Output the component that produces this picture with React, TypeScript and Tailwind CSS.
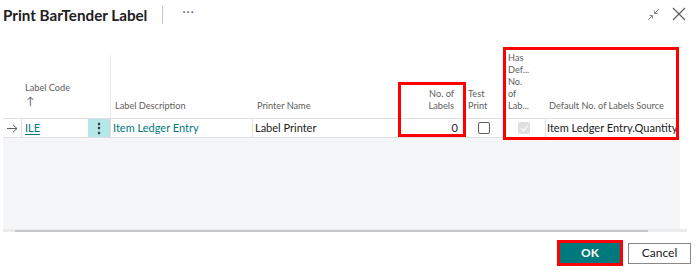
import React from "react";

const font = { fontFamily: 'Lato, "Open Sans", sans-serif' };

const App: React.FC = () => {
  return (
    <div
      className="w-[696px] h-[274px] bg-white text-[#212121] flex flex-col overflow-hidden"
      style={font}
    >
      {/* Title bar */}
      <div className="h-[30px] flex items-center pl-[3px] pr-[10px]">
        <h1 className="text-[15.2px] font-bold text-[#212121]">Print BarTender Label</h1>
        <div className="w-px h-[18px] bg-[#c8c6c4] ml-[15px]" />
        <span className="ml-[19px] text-[12px] text-[#605e5c] tracking-[1px] -mt-[6px]">···</span>
        <div className="flex-1" />
        <svg width="13" height="13" viewBox="0 0 13 13" className="mr-[12px] mt-[-2px]" fill="none" stroke="#8a8886" strokeWidth="1">
          <path d="M1 12 L5.5 7.5 M2.5 7.5 H5.5 V10.5" />
          <path d="M12 1 L7.5 5.5 M7.5 2.5 V5.5 H10.5" />
        </svg>
        <svg width="14" height="14" viewBox="0 0 14 14" className="mt-[-2px]" fill="none" stroke="#605e5c" strokeWidth="1.2">
          <path d="M1 1 L13 13 M13 1 L1 13" />
        </svg>
      </div>

      {/* Grid */}
      <div className="relative ml-[3px] w-[677px] flex flex-col">
        {/* Header */}
        <div className="h-[88px] flex text-[9.2px] leading-[12px] text-[#605e5c] whitespace-nowrap">
          <div className="w-[19px] shrink-0" />
          <div className="w-[88px] shrink-0 flex flex-col justify-end pb-[10px] pl-[3px]">
            <span>Label Code</span>
            <span className="text-[11px] leading-[14px] pl-[1px]">↑</span>
          </div>
          <div className="w-[143px] shrink-0 border-l border-[#edebe9] mt-[25px] flex items-end pb-[6px] pl-[4px]">
            Label Description
          </div>
          <div className="w-[147px] shrink-0 flex items-end pb-[6px] pl-[4px]">Printer Name</div>
          <div className="w-[65px] shrink-0 flex flex-col items-end justify-end pb-[6px] pr-[11px] text-right">
            <span>No. of</span>
            <span>Labels</span>
          </div>
          <div className="w-[38px] shrink-0 flex flex-col justify-end pb-[6px] pl-[3px]">
            <span>Test</span>
            <span>Print</span>
          </div>
          <div className="w-[42px] shrink-0 flex flex-col justify-end pb-[6px] pl-[5px]">
            <span>Has</span>
            <span>Def...</span>
            <span>No.</span>
            <span>of</span>
            <span>Lab...</span>
          </div>
          <div className="flex-1 flex items-end pb-[6px] pl-[4px]">
            Default No. of Labels Source
          </div>
        </div>

        {/* Data row */}
        <div className="h-[20px] flex items-stretch bg-white border-y border-[#e1dfdd] text-[11px] whitespace-nowrap">
          <div className="w-[19px] shrink-0 flex items-center justify-center text-[#605e5c] border-r border-[#e1dfdd]">
            <svg width="11" height="9" viewBox="0 0 11 9" fill="none" stroke="#605e5c" strokeWidth="1">
              <path d="M0 4.5 H10 M6 0.8 L10 4.5 L6 8.2" />
            </svg>
          </div>
          <div className="w-[66px] shrink-0 flex items-center pl-[3px]">
            <span className="text-[#00797d] underline underline-offset-2">ILE</span>
          </div>
          <div className="w-[22px] shrink-0 bg-[#b4e6ea] flex items-center justify-center text-[#212121] font-bold text-[12px]">
            ⋮
          </div>
          <div className="w-[143px] shrink-0 flex items-center pl-[2px] text-[#00797d] border-x border-[#e1dfdd]">
            Item Ledger Entry
          </div>
          <div className="w-[147px] shrink-0 flex items-center pl-[2px]">Label Printer</div>
          <div className="w-[65px] shrink-0 flex items-center justify-end pr-[7px] border-l border-[#e1dfdd]">
            0
          </div>
          <div className="w-[38px] shrink-0 flex items-center justify-center">
            <div className="w-[12px] h-[12px] rounded-[2px] border border-[#605e5c] bg-white" />
          </div>
          <div className="w-[42px] shrink-0 flex items-center justify-center">
            <div className="w-[12px] h-[12px] rounded-[2px] bg-[#e1dfdd] flex items-center justify-center">
              <svg width="9" height="8" viewBox="0 0 9 8" fill="none" stroke="#f8f8f8" strokeWidth="1.3">
                <path d="M1 4 L3.5 6.5 L8 1.5" />
              </svg>
            </div>
          </div>
          <div className="flex-1 flex items-center pl-[1px] border-l border-[#e1dfdd]">
            Item Ledger Entry.Quantity
          </div>
        </div>

        {/* Empty area */}
        <div className="h-[91px] bg-[#f5f6f7]" />

        {/* Highlight boxes */}
        <div className="absolute left-[395px] top-[52px] w-[68px] h-[55px] border-[3px] border-[#ff0000]" />
        <div className="absolute left-[500px] top-[17px] w-[176px] h-[93px] border-[3px] border-[#ff0000]" />
      </div>

      {/* Scrollbar */}
      <div className="ml-[3px] w-[684px] h-[3px] bg-[#ebebeb] flex items-center">
        <div className="ml-[12px] w-[633px] h-[2px] bg-[#c8c8c8]" />
      </div>

      {/* Footer */}
      <div className="flex-1 flex items-center justify-end pr-[5px] gap-[5px]">
        <button className="w-[66px] h-[26px] border-[3px] border-[#ff0000] bg-[#00797d] text-white text-[12px] font-bold flex items-center justify-center">
          OK
        </button>
        <button className="w-[63px] h-[21px] border border-[#8a8886] bg-white text-[#212121] text-[12px] flex items-center justify-center">
          Cancel
        </button>
      </div>
    </div>
  );
};

export default App;
